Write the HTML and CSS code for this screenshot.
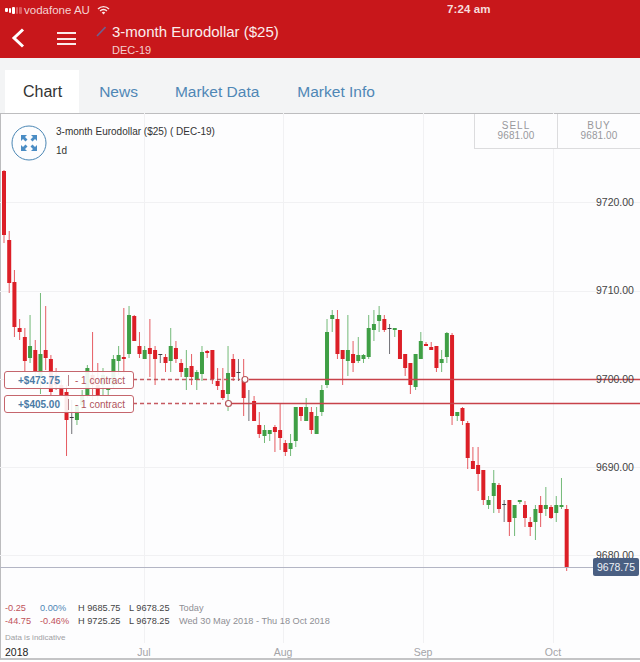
FILE: index.html
```html
<!DOCTYPE html>
<html lang="en">
<head>
<meta charset="utf-8">
<title>3-month Eurodollar</title>
<link rel="stylesheet" href="styles.css">
</head>
<body>
<div class="page">
  <header class="top">
    <div class="status">
      <div class="carrier">
        <span class="signal"><i class="on s1"></i><i class="on s2"></i><i class="on s3"></i><i class="s4"></i><i class="s5"></i></span>
        <span class="carrier-name">vodafone AU</span>
        <svg class="wifi" width="13" height="10" viewBox="0 0 13 10"><path d="M.5 3.4a8.4 8.4 0 0 1 12 0l-1 1a7 7 0 0 0-10 0z M2.6 5.5a5.4 5.4 0 0 1 7.8 0l-1 1a4 4 0 0 0-5.800 0z M4.700 7.600a2.500 2.500 0 0 1 3.600 0L6.500 9.400z" fill="#fff" opacity=".9"/></svg>
      </div>
      <div class="clock">7:24 am</div>
    </div>
    <div class="appbar">
      <svg class="back" width="14" height="20" viewBox="0 0 14 20"><path d="M12 1.500 3 10l9 8.500" fill="none" stroke="#fff" stroke-width="3"/></svg>
      <div class="burger"><i></i><i></i><i></i></div>
      <svg class="slash" width="10" height="11" viewBox="0 0 10 11"><path d="M1 10 9.500 1" stroke="#6d6190" stroke-width="1.600"/></svg>
      <div class="titles">
        <div class="title">3-month Eurodollar ($25)</div>
        <div class="subtitle">DEC-19</div>
      </div>
    </div>
  </header>
  <nav class="tabs">
    <a class="tab active">Chart</a>
    <a class="tab">News</a>
    <a class="tab">Market Data</a>
    <a class="tab">Market Info</a>
  </nav>
  <main class="chart">
    <svg id="plot" class="plot" width="640" height="546" viewBox="0 113 640 546">
      <g class="grid">
        <path d="M144.500 113V643M283.500 113V643M423.500 113V643M553.500 113V643"/>
        <path d="M0 202.500H640M0 291.500H640M0 379.500H640M0 467.500H640M0 555.500H640"/>
      </g>
      <g id="candles"></g>
      <g class="position">
        <path class="dash" d="M133 379.500H240"/>
        <path class="dash" d="M133 403.500H224"/>
        <path class="solid" d="M249 379.500H640M232 403.500H640"/>
        <circle cx="245" cy="379.500" r="3"/>
        <circle cx="228.500" cy="403.500" r="3"/>
      </g>
      <path class="last" d="M0 567.500H594"/>
      <g class="prices">
        <text x="596" y="206">9720.00</text>
        <text x="596" y="294">9710.00</text>
        <text x="596" y="383">9700.00</text>
        <text x="596" y="471">9690.00</text>
        <text x="596" y="559">9680.00</text>
      </g>
    </svg>

    <div class="instrument">
      <svg class="expand" width="36" height="36" viewBox="0 0 36 36">
        <circle cx="18" cy="18" r="17" fill="none" stroke="#4a86b4" stroke-width="1"/>
        <path d="M10 10h6l-2 2 2.500 2.500-2 2L12 14l-2 2z M26 10h-6l2 2-2.500 2.500 2 2L24 14l2 2z M10 26h6l-2-2 2.500-2.500-2-2L12 22l-2-2z M26 26h-6l2-2-2.500-2.500 2-2L24 22l2-2z" fill="#4a8cc4"/>
      </svg>
      <div class="instrument-text">
        <div class="instrument-name">3-month Eurodollar ($25) ( DEC-19)</div>
        <div class="interval">1d</div>
      </div>
    </div>

    <div class="quotes">
      <div class="quote"><span class="side">SELL</span><span class="price">9681.00</span></div>
      <div class="quote"><span class="side">BUY</span><span class="price">9681.00</span></div>
    </div>

    <div class="order order-a"><span class="pnl">+$473.75</span><span class="qty">- 1 contract</span></div>
    <div class="order order-b"><span class="pnl">+$405.00</span><span class="qty">- 1 contract</span></div>

    <div class="last-tag">9678.75</div>

    <div class="foot">
      <div class="stats">
        <span class="neg">-0.25</span><span class="blue">0.00%</span><span>H 9685.75</span><span>L 9678.25</span><span class="muted">Today</span>
        <span class="neg">-44.75</span><span class="neg">-0.46%</span><span>H 9725.25</span><span>L 9678.25</span><span class="muted">Wed 30 May 2018 - Thu 18 Oct 2018</span>
      </div>
      <div class="note">Data is indicative</div>
      <div class="axis">
        <span class="year">2018</span>
        <span class="month m-jul">Jul</span>
        <span class="month m-aug">Aug</span>
        <span class="month m-sep">Sep</span>
        <span class="month m-oct">Oct</span>
      </div>
    </div>
  </main>
</div>
<script src="chart.js"></script>
</body>
</html>
```
FILE: styles.css
```css
* { box-sizing: border-box; }
html, body { margin: 0; padding: 0; }
body {
  width: 640px;
  height: 662px;
  overflow: hidden;
  background: #fff;
  font-family: "Liberation Sans", Arial, sans-serif;
}
.page { display: flex; flex-direction: column; height: 662px; }

.top { height: 58px; background: #c8171b; color: #fff; flex: none; }
.status {
  height: 19px;
  display: flex;
  align-items: center;
  position: relative;
  padding: 1px 0 0 5px;
  font-size: 11.500px;
}
.carrier { display: flex; align-items: center; }
.signal { display: flex; align-items: center; gap: 1px; width: 19px; }
.signal i { width: 2.600px; height: 7px; background: #dd5a5c; border-radius: 1px; }
.signal .on { background: #fff; }
.signal .s1 { height: 4px; }
.signal .s2 { height: 5px; }
.signal .s3 { height: 7px; }
.carrier-name { color: #f4d2d2; }
.wifi { margin-left: 7px; }
.clock {
  position: absolute;
  left: 447px;
  top: 3px;
  font-weight: bold;
  font-size: 11.500px;
  color: #f6dcdc;
  letter-spacing: .1px;
}
.appbar { display: flex; align-items: flex-start; height: 39px; }
.back { margin: 9px 0 0 11px; }
.burger {
  margin: 13px 0 0 32px;
  width: 19px;
  height: 13px;
  display: flex;
  flex-direction: column;
  justify-content: space-between;
}
.burger i { height: 2px; background: #fbeaea; display: block; }
.slash { margin: 7px 0 0 20px; }
.titles { margin: 4px 0 0 6px; }
.title { font-size: 15px; line-height: 18px; color: #fbeeee; }
.subtitle { font-size: 11px; line-height: 15px; margin-top: 2px; color: #f3cfcf; }

.tabs {
  flex: none;
  height: 55px;
  background: #f3f4f5;
  display: flex;
  align-items: flex-end;
  padding-left: 5px;
  font-size: 15.500px;
}
.tab {
  height: 43px;
  display: flex;
  align-items: center;
  color: #4f87b5;
}
.tab:nth-child(2) { margin-left: 20px; }
.tab:nth-child(3) { margin-left: 37px; }
.tab:nth-child(4) { margin-left: 38px; }
.tab.active { background: #fff; color: #333; padding: 0 17px 0 18px; font-size: 16px; }

.chart {
  flex: none;
  height: 547px;
  position: relative;
  background: #fdfdfe;
  border-top: 1px solid #bdbdbf;
  border-bottom: 2px solid #c4c4c6;
  border-left: 1px solid #bcbcbe;
  display: flex;
  flex-direction: column;
  justify-content: flex-end;
}
.plot { position: absolute; left: -1px; top: -1px; display: block; }
.grid path { stroke: #f1f1f3; stroke-width: 1; fill: none; }
.wick { opacity: .72; }
.red { fill: #dc1f27; }
.green { fill: #3f9f45; }
.dark { fill: #3c3c44; }
.position .solid { stroke: #c8424a; stroke-width: 1.300; fill: none; }
.position .dash { stroke: #c0474f; stroke-width: 1.300; fill: none; stroke-dasharray: 4 3; opacity: .9; }
.position circle { fill: #fff; stroke: #b5555a; stroke-width: 1.200; }
.last { stroke: #b3b5c4; stroke-width: 1; fill: none; }
.prices text { font-size: 10.500px; fill: #444; }

.instrument { position: absolute; left: 10px; top: 11px; display: flex; }
.instrument-text { margin-left: 9px; font-size: 10px; color: #333; }
.instrument-name { line-height: 14px; }
.interval { margin-top: 5px; line-height: 14px; }

.quotes { position: absolute; right: 0; top: 0; display: flex; }
.quote {
  width: 83px;
  height: 35px;
  border-left: 1px solid #dcdcde;
  border-bottom: 1px solid #dcdcde;
  background: #fdfdfe;
  display: flex;
  flex-direction: column;
  align-items: center;
  padding-top: 7px;
  color: #98989c;
  font-size: 10px;
  line-height: 10px;
}
.side { letter-spacing: 1px; }
.price { letter-spacing: .1px; }

.order {
  position: absolute;
  left: 3px;
  width: 130px;
  height: 18px;
  border: 1.500px solid #c5666d;
  border-radius: 3px;
  background: rgba(255, 255, 255, .9);
  display: flex;
  align-items: center;
  font-size: 10px;
}
.order-a { top: 257px; }
.order-b { top: 281px; }
.pnl { width: 64px; text-align: right; padding-right: 8px; color: #4b7ba6; font-weight: bold; border-right: 1px solid #b9838a; }
.qty { margin-left: 6px; color: #b0535c; }

.last-tag {
  position: absolute;
  left: 592px;
  top: 444px;
  width: 46px;
  height: 18px;
  border-radius: 2px;
  background: #4a5f82;
  color: #eef1f6;
  font-size: 10.500px;
  display: flex;
  align-items: center;
  justify-content: center;
}

.foot { position: relative; padding-left: 4px; }
.stats {
  display: grid;
  grid-template-columns: 35px 38px 51px 50px auto;
  grid-auto-rows: 13px;
  font-size: 9.200px;
  line-height: 13px;
  color: #444;
}
.neg { color: #c0525a; }
.blue { color: #4f87b5; }
.muted { color: #8f8f94; }
.note { font-size: 8px; color: #a0a0a4; margin-top: 4px; line-height: 11px; }
.axis {
  position: relative;
  height: 13px;
  margin-top: 2px;
  font-size: 10.500px;
  line-height: 14px;
  color: #a4a4a8;
}
.year { color: #222; font-size: 10.500px; }
.month { position: absolute; top: 0; transform: translateX(-50%); }
.m-jul { left: 139px; }
.m-aug { left: 278px; }
.m-sep { left: 418px; }
.m-oct { left: 548px; }
```
FILE: chart.js
```js
// colour, wick top, body top, body bottom, wick bottom
var bars = [
  "r170 171 235 243","r231 240 283 293","r270 282 327 337","r319 328 332 340","r328 337 361 372",
  "g315 346 358 363","r340 350 371 378","g293 354 378 394","r306 350 358 370","r355 359 392 395",
  "r368 375 385 390","r380 385 395 396","r385 392 420 456","k400 417 419 434","g405 405 420 425",
  "g390 395 405 410","g365 368 395 398","r332 375 385 400","r363 385 395 400","g368 375 385 395",
  "g388 388 390 395","g355 359 385 388","g346 355 361 375","r308 357 359 374","g306 315 354 358",
  "r315 316 341 341","r332 346 354 358","g346 350 359 359","r319 348 354 377","r346 350 359 385",
  "k354 354 355 363","r354 357 363 372","g328 346 361 372","r341 348 359 363","r359 363 372 377",
  "g350 368 377 390","r354 366 377 385","g370 372 380 390","g346 352 374 381","r350 351 353 358",
  "r350 350 379 384","r368 381 386 390","r368 390 398 400","g346 373 394 411","r354 359 377 381",
  "k359 372 373 381","r359 381 398 416","k390 403 404 421","r396 401 421 421","r412 425 434 438",
  "g425 430 436 443","g430 430 434 441","r425 427 432 452","r403 430 438 450","r440 443 452 456",
  "g434 443 449 456","g407 407 441 447","r407 407 416 421","g398 407 421 421","r407 412 430 434",
  "g407 416 434 434","g385 390 412 416","g319 332 385 388","g310 315 319 332","r310 319 354 359",
  "r350 350 359 385","g315 350 361 376","r341 354 363 372","g337 355 361 363","g354 355 359 363",
  "g315 328 357 359","g310 324 330 341","g306 315 321 332","r315 319 330 332","k324 328 329 354",
  "g328 328 330 337","r330 330 359 359","r354 354 368 376","r363 363 385 394","g354 354 387 390",
  "g332 341 359 359","r342 344 346 346","r342 347 350 350","r346 346 368 372","g350 359 363 372",
  "g332 333 357 363","r333 335 416 425","g412 412 416 421","r407 408 421 425","r421 423 458 469",
  "r447 461 469 469","r447 465 474 491","r470 470 500 505","g496 500 505 509","g470 483 496 513",
  "r483 485 509 513","k500 504 505 522","r500 500 522 536","g505 505 518 536","g500 500 502 504",
  "r501 505 518 527","r517 522 527 536","g505 509 522 540","r496 505 513 527","g487 505 509 516",
  "r505 507 518 519","g496 505 513 522","g478 505 507 509","r505 509 567 571"
];
var NS = "http://www.w3.org/2000/svg";
var host = document.getElementById("candles");
var classes = { r: "red", g: "green", k: "dark" };

function addRect(x, y, w, h, cls) {
  var el = document.createElementNS(NS, "rect");
  el.setAttribute("x", x);
  el.setAttribute("y", y);
  el.setAttribute("width", w);
  el.setAttribute("height", h);
  el.setAttribute("class", cls);
  host.appendChild(el);
}

bars.forEach(function (bar, i) {
  var cls = classes[bar.charAt(0)];
  var v = bar.slice(1).split(" ").map(Number);
  var x = 4 + 5.21 * i;
  addRect(x - 0.5, v[0], 1, v[3] - v[0], cls + " wick");
  if (cls === "dark") {
    addRect(x - 2, v[1], 4, 1, cls);
  } else {
    addRect(x - 2, v[1], 4, v[2] - v[1], cls);
  }
});
```
